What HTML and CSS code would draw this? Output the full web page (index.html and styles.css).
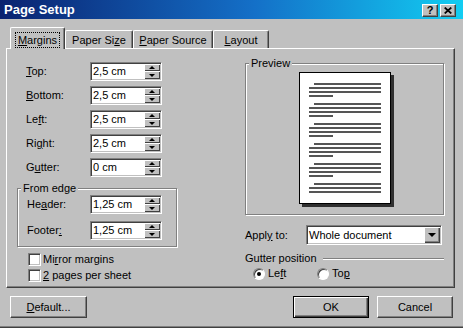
FILE: index.html
```html
<!DOCTYPE html>
<html>
<head>
<meta charset="utf-8">
<title>Page Setup</title>
<link rel="stylesheet" href="styles.css">
</head>
<body>
<div class="window">
  <div class="titlebar">
    <span class="title">Page Setup</span>
    <div class="tbtns">
      <span class="tbtn help">?</span>
      <span class="tbtn close"><svg width="8" height="7" viewBox="0 0 8 7"><path d="M0.7 0.5 L7.3 6.5 M7.3 0.5 L0.7 6.5" stroke="#000" stroke-width="1.7" fill="none"/></svg></span>
    </div>
  </div>

  <div class="tabs">
    <div class="tab active w-margins"><span class="focus"><u>M</u>argins</span></div>
    <div class="tab w-size">Paper Si<u>z</u>e</div>
    <div class="tab w-source"><u>P</u>aper Source</div>
    <div class="tab w-layout"><u>L</u>ayout</div>
  </div>

  <div class="panel">
    <div class="leftcol">
      <div class="rows">
        <div class="row"><span class="lbl"><u>T</u>op:</span><div class="field"><span class="val">2,5 cm</span><span class="spin"><span class="half up"></span><span class="half dn"></span></span></div></div>
        <div class="row"><span class="lbl"><u>B</u>ottom:</span><div class="field"><span class="val">2,5 cm</span><span class="spin"><span class="half up"></span><span class="half dn"></span></span></div></div>
        <div class="row"><span class="lbl">Le<u>f</u>t:</span><div class="field"><span class="val">2,5 cm</span><span class="spin"><span class="half up"></span><span class="half dn"></span></span></div></div>
        <div class="row"><span class="lbl">Ri<u>g</u>ht:</span><div class="field"><span class="val">2,5 cm</span><span class="spin"><span class="half up"></span><span class="half dn"></span></span></div></div>
        <div class="row"><span class="lbl">G<u>u</u>tter:</span><div class="field"><span class="val">0 cm</span><span class="spin"><span class="half up"></span><span class="half dn"></span></span></div></div>
      </div>

      <fieldset class="group fromedge">
        <legend>From edge</legend>
        <div class="fe-rows">
          <div class="row fe"><span class="lbl">He<u>a</u>der:</span><div class="field"><span class="val">1,25 cm</span><span class="spin"><span class="half up"></span><span class="half dn"></span></span></div></div>
          <div class="row fe"><span class="lbl">Footer<u>:</u></span><div class="field"><span class="val">1,25 cm</span><span class="spin"><span class="half up"></span><span class="half dn"></span></span></div></div>
        </div>
      </fieldset>

      <div class="checks">
        <div class="check"><span class="box"></span><span>Mi<u>r</u>ror margins</span></div>
        <div class="check"><span class="box"></span><span><u>2</u> pages per sheet</span></div>
      </div>
    </div>

    <div class="rightcol">
      <fieldset class="group preview">
        <legend>Preview</legend>
        <div class="page">
          <svg width="90" height="130" viewBox="0 0 90 130" fill="#555">
            <rect x="14" y="10" width="67" height="2"/><rect x="9" y="14" width="72" height="2"/><rect x="9" y="18" width="72" height="2"/><rect x="9" y="22" width="24" height="2"/>
            <rect x="14" y="30" width="67" height="2"/><rect x="9" y="34" width="72" height="2"/><rect x="9" y="38" width="72" height="2"/><rect x="9" y="42" width="24" height="2"/>
            <rect x="14" y="50" width="67" height="2"/><rect x="9" y="54" width="72" height="2"/><rect x="9" y="58" width="72" height="2"/><rect x="9" y="62" width="24" height="2"/>
            <rect x="14" y="70" width="67" height="2"/><rect x="9" y="74" width="72" height="2"/><rect x="9" y="78" width="72" height="2"/><rect x="9" y="82" width="24" height="2"/>
            <rect x="14" y="90" width="67" height="2"/><rect x="9" y="94" width="72" height="2"/><rect x="9" y="98" width="72" height="2"/><rect x="9" y="102" width="24" height="2"/>
            <rect x="14" y="110" width="67" height="2"/><rect x="9" y="114" width="72" height="2"/><rect x="9" y="118" width="72" height="2"/>
          </svg>
        </div>
      </fieldset>

      <div class="apply">
        <span class="lbl2">Appl<u>y</u> to:</span>
        <div class="combo"><span class="val">Whole document</span><span class="dd"></span></div>
      </div>

      <div class="gutterpos"><span>Gutter position</span><span class="etch"></span></div>

      <div class="radios">
        <div class="ritem"><span class="radio on"></span><span>Le<u>f</u>t</span></div>
        <div class="ritem"><span class="radio"></span><span>To<u>p</u></span></div>
      </div>
    </div>
  </div>

  <div class="footer">
    <div class="btn w-default"><span><u>D</u>efault...</span></div>
    <div class="btngroup">
      <div class="btn default w-ok">OK</div>
      <div class="btn w-cancel">Cancel</div>
    </div>
  </div>
</div>
</body>
</html>
```

FILE: styles.css
```css
* { box-sizing: border-box; }
html, body { margin: 0; padding: 0; }
body {
  width: 463px;
  height: 328px;
  overflow: hidden;
  background: #c0c0c0;
  font-family: "Liberation Sans", Arial, sans-serif;
  font-size: 11px;
  color: #000;
}
u { text-underline-offset: 1px; }

.window {
  width: 463px;
  height: 328px;
  background: #c0c0c0;
  border-bottom: 1px solid #404040;
  box-shadow: inset 0 -1px #808080;
  display: flex;
  flex-direction: column;
}

/* title bar */
.titlebar {
  height: 19px;
  flex: none;
  display: flex;
  align-items: flex-start;
  justify-content: space-between;
  padding: 0 7px 0 4px;
  background: linear-gradient(to right, #0a2270 0%, #1470c8 55%, #12cdf2 100%);
}
.title {
  color: #fff;
  font-weight: bold;
  font-size: 13px;
  line-height: 17px;
  padding-top: 1px;
}
.tbtns { display: flex; gap: 2px; margin-top: 4px; }
.tbtn {
  width: 16px;
  height: 13px;
  display: flex;
  align-items: center;
  justify-content: center;
  background: #c0c0c0;
  border: 1px solid;
  border-color: #fff #404040 #404040 #fff;
  box-shadow: inset -1px -1px #808080;
}
.help { font-weight: bold; font-size: 11px; line-height: 11px; }

/* tabs */
.tabs {
  display: flex;
  align-items: flex-end;
  height: 22px;
  margin-top: 8px;
  margin-bottom: -1px;
  padding-left: 10px;
  position: relative;
  z-index: 1;
  flex: none;
}
.tab {
  height: 18px;
  margin-bottom: 1px;
  background: #c0c0c0;
  border-top: 1px solid #fff;
  border-left: 1px solid #fff;
  border-right: 1px solid #404040;
  box-shadow: inset -1px 0 #808080;
  border-radius: 2px 2px 0 0;
  padding-top: 2px;
  line-height: 15px;
  text-align: center;
  white-space: nowrap;
}
.tab.active {
  height: 22px;
  margin-bottom: 0;
  padding-top: 4px;
  display: flex;
  justify-content: center;
  align-items: flex-start;
}
.focus { border: 1px dotted #000; padding: 0 2px; line-height: 14px; }
.w-margins { width: 55px; }
.w-size { width: 68px; }
.w-source { width: 80px; }
.w-layout { width: 56px; }

/* panel */
.panel {
  flex: none;
  margin-left: 6px;
  width: 449px;
  height: 240px;
  border-top: 1px solid #fff;
  border-left: 1px solid #fff;
  border-right: 1px solid #404040;
  border-bottom: 1px solid #404040;
  box-shadow: inset -1px -1px #808080;
  display: flex;
  align-items: flex-start;
}
.leftcol { width: 160px; margin-left: 10px; padding-top: 13px; }
.rightcol { width: 199px; margin-left: 68px; padding-top: 8px; }

.rows { padding-left: 9px; display: flex; flex-direction: column; gap: 5px; }
.row { display: flex; align-items: center; height: 19px; }
.lbl { width: 64px; line-height: 13px; }
.fe .lbl { width: 63px; }

.field {
  display: flex;
  width: 72px;
  height: 19px;
  background: #fff;
  border: 1px solid;
  border-color: #808080 #fff #fff #808080;
  box-shadow: inset 1px 1px #404040, inset -1px -1px #c0c0c0;
  padding: 1px;
}
.field .val { flex: 1; padding-left: 1px; line-height: 15px; }
.spin { width: 16px; display: flex; flex-direction: column; }
.half {
  background: #c0c0c0;
  box-shadow: inset 1px 1px #fff, inset -1px -1px #404040;
  display: flex;
  align-items: center;
  justify-content: center;
}
.half.up { height: 7px; }
.half.dn { height: 8px; }
.half.up::after {
  content: "";
  width: 0; height: 0;
  border-left: 3px solid transparent;
  border-right: 3px solid transparent;
  border-bottom: 3px solid #000;
}
.half.dn::after {
  content: "";
  width: 0; height: 0;
  border-left: 3px solid transparent;
  border-right: 3px solid transparent;
  border-top: 3px solid #000;
}

/* group boxes */
.group {
  margin: 0;
  padding: 0;
  min-width: 0;
  border: 1px solid #808080;
  box-shadow: inset 1px 1px #fff, 1px 1px #fff;
}
.group legend {
  margin-left: 3px;
  padding: 0 2px;
  line-height: 13px;
  background: #c0c0c0;
}
.fromedge { width: 160px; margin-top: 5px; }
.fe-rows { display: flex; flex-direction: column; gap: 7px; padding: 0 0 6px 9px; }

.checks { margin-top: 4px; padding-left: 11px; display: flex; flex-direction: column; }
.check { display: flex; align-items: center; height: 16px; gap: 2px; }
.box {
  width: 13px;
  height: 13px;
  background: #fff;
  border: 1px solid;
  border-color: #808080 #fff #fff #808080;
  box-shadow: inset 1px 1px #404040, inset -1px -1px #c0c0c0;
}

/* preview */
.preview { width: 199px; }
.page {
  width: 92px;
  height: 132px;
  margin: 2px auto 10px;
  background: #fff;
  border: 1px solid #000;
  box-shadow: 3px 3px 0 #303030;
}
.page svg { display: block; }

.apply { display: flex; align-items: center; height: 20px; margin-top: 10px; }
.lbl2 { width: 61px; }
.combo {
  display: flex;
  width: 136px;
  height: 20px;
  background: #fff;
  border: 1px solid;
  border-color: #808080 #fff #fff #808080;
  box-shadow: inset 1px 1px #404040, inset -1px -1px #c0c0c0;
  padding: 1px;
}
.combo .val { flex: 1; padding-left: 1px; line-height: 16px; }
.dd {
  width: 16px;
  height: 16px;
  background: #c0c0c0;
  box-shadow: inset 1px 1px #fff, inset -1px -1px #404040, inset -2px -2px #808080;
  display: flex;
  align-items: center;
  justify-content: center;
}
.dd::after {
  content: "";
  width: 0; height: 0;
  border-left: 4px solid transparent;
  border-right: 4px solid transparent;
  border-top: 4px solid #000;
  margin-left: -1px;
}

.gutterpos { display: flex; align-items: center; height: 13px; margin-top: 7px; line-height: 13px; }
.etch {
  flex: 1;
  height: 2px;
  margin-left: 6px;
  border-top: 1px solid #808080;
  border-bottom: 1px solid #fff;
}

.radios { display: flex; height: 13px; margin-top: 2px; padding-left: 8px; }
.ritem { display: flex; align-items: center; gap: 3px; width: 64px; line-height: 13px; }
.radio {
  width: 12px;
  height: 12px;
  border-radius: 50%;
  background: #fff;
  border: 1px solid;
  border-color: #808080 #fff #fff #808080;
  box-shadow: inset 1px 1px #404040;
  display: flex;
  align-items: center;
  justify-content: center;
}
.radio.on::after {
  content: "";
  width: 4px;
  height: 4px;
  border-radius: 50%;
  background: #000;
}

/* footer buttons */
.footer {
  flex: none;
  display: flex;
  justify-content: space-between;
  margin-top: 8px;
  padding: 0 10px;
}
.btngroup { display: flex; gap: 8px; }
.btn {
  height: 22px;
  display: flex;
  align-items: center;
  justify-content: center;
  background: #c0c0c0;
  border: 1px solid;
  border-color: #fff #404040 #404040 #fff;
  box-shadow: inset -1px -1px #808080;
  line-height: 13px;
}
.btn.default {
  border-color: #000;
  box-shadow: inset 1px 1px #fff, inset -1px -1px #404040, inset -2px -2px #808080;
}
.w-default { width: 77px; }
.w-ok { width: 76px; }
.w-cancel { width: 76px; }
```
